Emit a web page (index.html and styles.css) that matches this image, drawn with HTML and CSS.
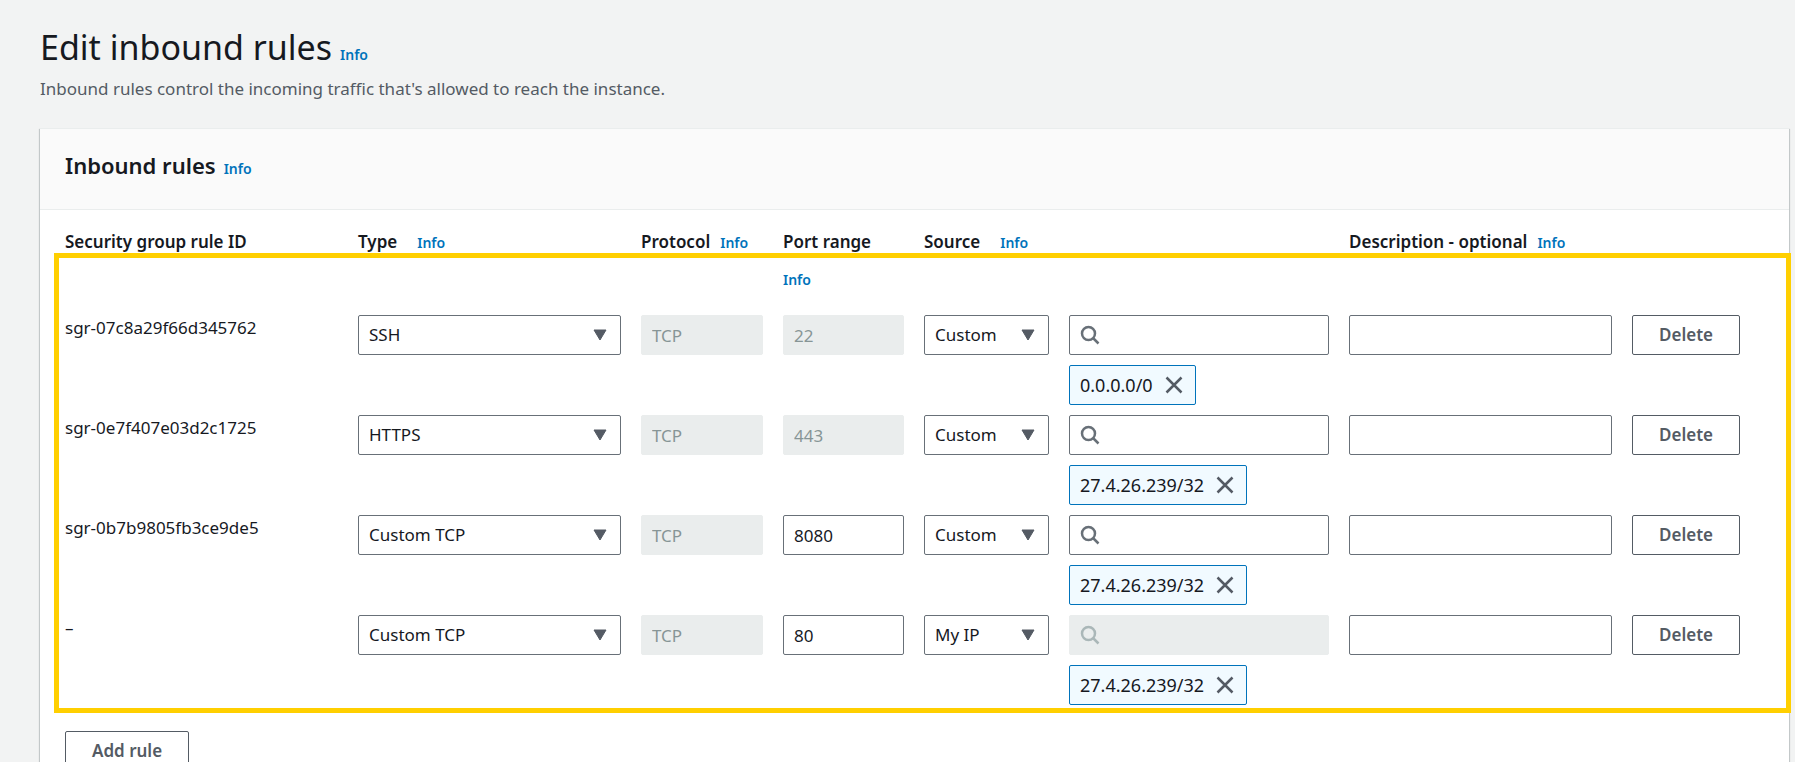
FILE: index.html
```html
<!DOCTYPE html>
<html lang="en">
<head>
<meta charset="utf-8">
<meta name="viewport" content="width=device-width, initial-scale=1">
<title>Edit inbound rules</title>
<link rel="stylesheet" href="styles.css">
</head>
<body>
<svg class="defs" aria-hidden="true">
  <symbol id="caret" viewBox="0 0 14 12"><path d="M1 1h12L7 11z" fill="currentColor" stroke="currentColor" stroke-width="1" stroke-linejoin="round"/></symbol>
  <symbol id="search" viewBox="0 0 20 20"><circle cx="8.500" cy="8.500" r="6.500" fill="none" stroke="currentColor" stroke-width="2.500"/><path d="M13 13l5.500 5.500" fill="none" stroke="currentColor" stroke-width="2.500"/></symbol>
  <symbol id="close" viewBox="0 0 18 18"><path d="M1.500 1.500l15 15M16.500 1.500l-15 15" fill="none" stroke="currentColor" stroke-width="2.500"/></symbol>
</svg>
<main class="page">
  <header class="page-header">
    <div class="heading"><h1>Edit inbound rules</h1><a class="info" href="#">Info</a></div>
    <p class="description">Inbound rules control the incoming traffic that's allowed to reach the instance.</p>
  </header>
  <section class="card">
    <div class="card-header heading"><h2>Inbound rules</h2><a class="info" href="#">Info</a></div>
    <div class="card-body">
      <table class="rules">
        <thead>
          <tr>
            <th>Security group rule ID</th>
            <th>Type<a class="info far" href="#">Info</a></th>
            <th>Protocol<a class="info" href="#">Info</a></th>
            <th class="stacked">Port range<a class="info" href="#">Info</a></th>
            <th class="wide">Source<a class="info far" href="#">Info</a></th>
            <th>Description - optional<a class="info" href="#">Info</a></th>
            <td></td>
          </tr>
        </thead>
        <tbody>
          <tr>
            <td class="rule-id">sgr-07c8a29f66d345762</td>
            <td><div class="select"><select aria-label="Type"><option>SSH</option></select><svg class="caret"><use href="#caret"/></svg></div></td>
            <td><input class="field" aria-label="Protocol" value="TCP" disabled></td>
            <td><input class="field" aria-label="Port range" value="22" disabled></td>
            <td><div class="select"><select aria-label="Source"><option>Custom</option></select><svg class="caret"><use href="#caret"/></svg></div></td>
            <td class="source">
              <label class="search"><svg><use href="#search"/></svg><input type="text" aria-label="Search source"></label>
              <span class="token">0.0.0.0/0<button type="button" aria-label="Remove 0.0.0.0/0"><svg><use href="#close"/></svg></button></span>
            </td>
            <td><input class="field" aria-label="Description"></td>
            <td><button class="button" type="button">Delete</button></td>
          </tr>
          <tr>
            <td class="rule-id">sgr-0e7f407e03d2c1725</td>
            <td><div class="select"><select aria-label="Type"><option>HTTPS</option></select><svg class="caret"><use href="#caret"/></svg></div></td>
            <td><input class="field" aria-label="Protocol" value="TCP" disabled></td>
            <td><input class="field" aria-label="Port range" value="443" disabled></td>
            <td><div class="select"><select aria-label="Source"><option>Custom</option></select><svg class="caret"><use href="#caret"/></svg></div></td>
            <td class="source">
              <label class="search"><svg><use href="#search"/></svg><input type="text" aria-label="Search source"></label>
              <span class="token">27.4.26.239/32<button type="button" aria-label="Remove 27.4.26.239/32"><svg><use href="#close"/></svg></button></span>
            </td>
            <td><input class="field" aria-label="Description"></td>
            <td><button class="button" type="button">Delete</button></td>
          </tr>
          <tr>
            <td class="rule-id">sgr-0b7b9805fb3ce9de5</td>
            <td><div class="select"><select aria-label="Type"><option>Custom TCP</option></select><svg class="caret"><use href="#caret"/></svg></div></td>
            <td><input class="field" aria-label="Protocol" value="TCP" disabled></td>
            <td><input class="field" aria-label="Port range" value="8080"></td>
            <td><div class="select"><select aria-label="Source"><option>Custom</option></select><svg class="caret"><use href="#caret"/></svg></div></td>
            <td class="source">
              <label class="search"><svg><use href="#search"/></svg><input type="text" aria-label="Search source"></label>
              <span class="token">27.4.26.239/32<button type="button" aria-label="Remove 27.4.26.239/32"><svg><use href="#close"/></svg></button></span>
            </td>
            <td><input class="field" aria-label="Description"></td>
            <td><button class="button" type="button">Delete</button></td>
          </tr>
          <tr>
            <td class="rule-id">–</td>
            <td><div class="select"><select aria-label="Type"><option>Custom TCP</option></select><svg class="caret"><use href="#caret"/></svg></div></td>
            <td><input class="field" aria-label="Protocol" value="TCP" disabled></td>
            <td><input class="field" aria-label="Port range" value="80"></td>
            <td><div class="select"><select aria-label="Source"><option>My IP</option></select><svg class="caret"><use href="#caret"/></svg></div></td>
            <td class="source">
              <label class="search disabled"><svg><use href="#search"/></svg><input type="text" aria-label="Search source" disabled></label>
              <span class="token">27.4.26.239/32<button type="button" aria-label="Remove 27.4.26.239/32"><svg><use href="#close"/></svg></button></span>
            </td>
            <td><input class="field" aria-label="Description"></td>
            <td><button class="button" type="button">Delete</button></td>
          </tr>
        </tbody>
      </table>
      <div class="highlight"></div>
      <button class="button add" type="button">Add rule</button>
    </div>
  </section>
</main>
</body>
</html>
```
FILE: styles.css
```css
* { box-sizing: border-box; }
body {
  margin: 0;
  background: #f2f3f3;
  color: #16191f;
  font-family: "Noto Sans", "Open Sans", sans-serif;
  font-size: 17px;
  line-height: 28px;
}
input, select, button { font: inherit; color: inherit; margin: 0; }
h1, h2, p { margin: 0; }
.defs { position: absolute; width: 0; height: 0; }

.page { height: 100vh; overflow: hidden; padding: 23px 6px 0 40px; }
.heading { display: flex; align-items: baseline; gap: 8px; }
h1 { font-size: 34px; line-height: 48px; font-weight: 400; }
h2 { font-size: 22px; line-height: 32px; font-weight: 600; }
.description { margin-top: 4px; color: #545b64; }
.info { color: #0073bb; font-size: 14px; font-weight: 600; text-decoration: none; }

.card {
  margin-top: 25px;
  background: #fff;
  border-top: 1px solid #eaeded;
  box-shadow: 0 1px 1px rgba(0, 28, 36, .3), 1px 1px 1px rgba(0, 28, 36, .15), -1px 1px 1px rgba(0, 28, 36, .15);
}
.card-header { padding: 20px 25px 26px; background: #fafafa; border-bottom: 1px solid #eaeded; }
.card-body { position: relative; padding: 13px 24px 40px 25px; }

.rules, .rules thead, .rules tbody { display: block; }
.rules tr {
  display: grid;
  grid-template-columns:
    minmax(0, 273fr) minmax(0, 263fr) minmax(0, 122fr) minmax(0, 121fr)
    minmax(0, 125fr) minmax(0, 260fr) minmax(0, 263fr) minmax(0, 133fr);
  column-gap: 20px;
}
.rules th { padding: 0; text-align: left; font-weight: 600; line-height: 38px; white-space: nowrap; }
.rules td { padding: 0; }
.rules th .info { margin-left: 10px; }
.rules th .info.far { margin-left: 20px; }
.rules th.wide { grid-column: span 2; }
.rules th.stacked .info { display: block; margin-left: 0; }
.rules thead { padding-bottom: 16px; }
.rules tbody { display: grid; row-gap: 10px; }
.rules .rule-id { line-height: 26px; }

.field, .select select, .search {
  display: block;
  width: 100%;
  height: 40px;
  padding: 0 10px;
  background: #fff;
  border: 1px solid #687078;
  border-radius: 2px;
}
.field:disabled, .search.disabled { background: #eaeded; border-color: #eaeded; color: #879596; }
.select { position: relative; }
.select select { appearance: none; padding-right: 30px; }
.caret { position: absolute; top: 14px; right: 14px; width: 14px; height: 12px; color: #545b64; pointer-events: none; }
.search { display: flex; align-items: center; gap: 8px; color: #687078; }
.search svg { flex: none; width: 20px; height: 20px; }
.search input { flex: 1; min-width: 0; padding: 0; border: 0; background: none; outline: 0; }
.search.disabled svg { color: #aab7b8; }
.source { display: flex; flex-direction: column; align-items: flex-start; gap: 10px; }

.token {
  display: inline-flex;
  align-items: center;
  gap: 12px;
  height: 40px;
  padding: 0 12px 0 10px;
  background: #f1faff;
  border: 1px solid #0073bb;
  border-radius: 2px;
  font-size: 18px;
}
.token button { display: flex; padding: 0; border: 0; background: none; color: #545b64; }
.token svg { width: 18px; height: 18px; }

.button {
  height: 40px;
  padding: 0 26px;
  background: #fff;
  border: 1px solid #545b64;
  border-radius: 2px;
  color: #545b64;
  font-weight: 600;
}
.add { display: block; margin-top: 26px; }
.highlight {
  position: absolute;
  top: 43px;
  left: 14px;
  right: -2px;
  height: 460px;
  border: 5px solid #ffcf00;
  pointer-events: none;
}
```
